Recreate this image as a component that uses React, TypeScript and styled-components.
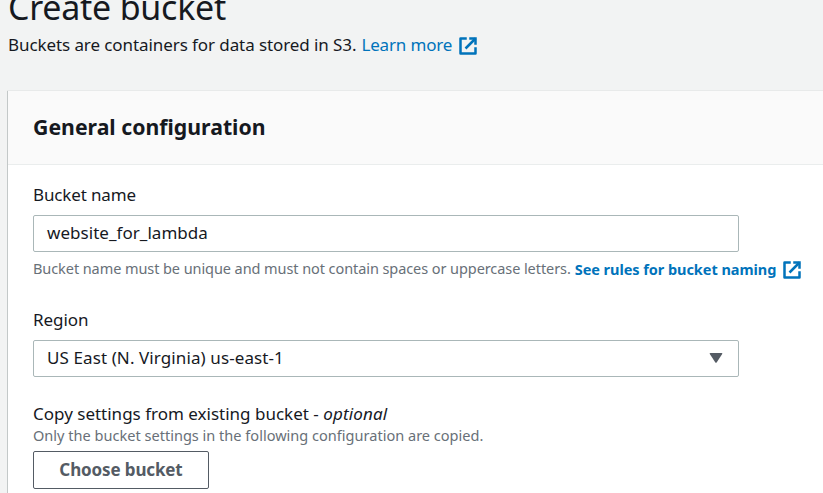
import React from "react";
import styled, { createGlobalStyle } from "styled-components";

const GlobalStyle = createGlobalStyle`
  html, body { margin: 0; height: 100%; overflow: hidden; }
  body {
    background: #f2f3f3;
    color: #16191f;
    font-family: "Noto Sans", "Open Sans", sans-serif;
    font-size: 17px;
    line-height: 22px;
    white-space: nowrap;
  }
  *, *::before, *::after { box-sizing: border-box; }
`;

const Page = styled.main`
  height: 493px;
  overflow: hidden;
  display: flex;
  flex-direction: column;
`;

const PageHeader = styled.header`
  flex: none;
  padding-left: 8px;
  height: 91px;
`;

const Title = styled.h1`
  margin: -15px 0 5px;
  font-size: 34px;
  font-weight: 400;
  line-height: 44px;
  letter-spacing: -0.25px;
`;

const Description = styled.p`
  margin: 0;
  display: flex;
  letter-spacing: -0.085px;
`;

const Link = styled.a<{ $strong?: boolean }>`
  display: inline-flex;
  color: #0073bb;
  text-decoration: none;
  margin-left: ${({ $strong }) => ($strong ? 4 : 5)}px;
  padding-top: ${({ $strong }) => ($strong ? 1 : 0)}px;
  font-weight: ${({ $strong }) => ($strong ? 700 : 400)};
  letter-spacing: ${({ $strong }) => ($strong ? -0.05 : -0.17)}px;
`;

const IconSvg = styled.svg<{ $top: number }>`
  flex: none;
  width: 20px;
  height: 20px;
  margin: ${({ $top }) => $top}px 0 0 6px;
  fill: none;
  stroke: currentColor;
  stroke-width: 2;
`;

const Panel = styled.section`
  flex: none;
  height: 420px;
  margin-left: 7px;
  background: #fff;
  border-left: 1px solid #c3c8c8;
  box-shadow: 0 -1px 0 #e8eaea;
`;

const PanelHeader = styled.div`
  height: 74px;
  padding: 21px 25px 0;
  background: #fafafa;
  border-bottom: 1px solid #eaeded;
`;

const PanelTitle = styled.h2`
  margin: 0;
  font-size: 21.25px;
  font-weight: 700;
  line-height: 30px;
`;

const Field = styled.div<{ $gap: number }>`
  padding: ${({ $gap }) => $gap}px 0 0 25px;
`;

const Label = styled.label<{ $spacing?: number }>`
  display: block;
  letter-spacing: ${({ $spacing = 0 }) => $spacing}px;
`;

const Optional = styled.i`
  letter-spacing: 0.15px;
`;

const Control = styled.div<{ $spacing: number }>`
  display: flex;
  align-items: center;
  justify-content: space-between;
  width: 706px;
  height: 37px;
  margin-top: 9px;
  padding: 0 15px 2px 13px;
  border: 1px solid #aab7b8;
  border-radius: 2px;
  letter-spacing: ${({ $spacing }) => $spacing}px;
`;

const Caret = styled.svg`
  width: 14px;
  height: 11px;
  fill: #545b64;
`;

const Hint = styled.div<{ $top: number; $size: number; $spacing?: number }>`
  display: flex;
  margin-top: ${({ $top }) => $top}px;
  height: 20px;
  color: #687078;
  font-size: ${({ $size }) => $size}px;
  line-height: 20px;
  letter-spacing: ${({ $spacing = 0 }) => $spacing}px;
`;

const Button = styled.button`
  display: block;
  width: 176px;
  height: 38px;
  margin-top: 6px;
  padding: 0 0 1px;
  border: 1px solid #545b64;
  border-radius: 2px;
  background: #fff;
  color: #545b64;
  font: 700 17px/22px "Noto Sans", "Open Sans", sans-serif;
  letter-spacing: -0.13px;
`;

const ExternalIcon = ({ top = 2 }: { top?: number }) => (
  <IconSvg $top={top} viewBox="0 0 16 16" aria-hidden="true">
    <path d="M10 2h4v4" strokeLinecap="square" />
    <path d="M6 10l8-8" />
    <path d="M14 9.048V14H2V2h5" strokeLinejoin="round" />
  </IconSvg>
);

export default function App() {
  return (
    <Page>
      <GlobalStyle />
      <PageHeader>
        <Title>Create bucket</Title>
        <Description>
          Buckets are containers for data stored in S3.
          <Link>
            Learn more
            <ExternalIcon />
          </Link>
        </Description>
      </PageHeader>
      <Panel>
        <PanelHeader>
          <PanelTitle>General configuration</PanelTitle>
        </PanelHeader>
        <Field $gap={19}>
          <Label $spacing={-0.15}>Bucket name</Label>
          <Control $spacing={0.04}>website_for_lambda</Control>
          <Hint $top={6} $size={14.5} $spacing={-0.078}>
            Bucket name must be unique and must not contain spaces or uppercase letters.
            <Link $strong>
              See rules for bucket naming
              <ExternalIcon top={1} />
            </Link>
          </Hint>
        </Field>
        <Field $gap={31}>
          <Label $spacing={-0.05}>Region</Label>
          <Control $spacing={0.1}>
            US East (N. Virginia) us-east-1
            <Caret viewBox="0 0 14 11" aria-hidden="true">
              <path d="M1.3 1h11.4q1.1 0 .5 1L7.8 10.2q-.8 1-1.6 0L.8 2Q.2 1 1.3 1z" />
            </Caret>
          </Control>
        </Field>
        <Field $gap={26}>
          <Label>
            Copy settings from existing bucket - <Optional>optional</Optional>
          </Label>
          <Hint $top={0} $size={14.56}>
            Only the bucket settings in the following configuration are copied.
          </Hint>
          <Button>Choose bucket</Button>
        </Field>
      </Panel>
    </Page>
  );
}
